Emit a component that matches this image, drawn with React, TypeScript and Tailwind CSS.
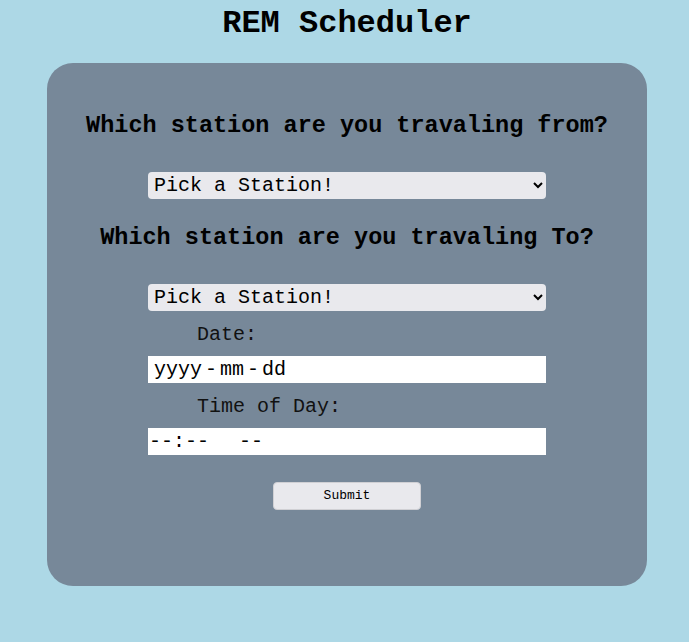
import React from "react";

export default function App() {
  const mono = { fontFamily: '"Liberation Mono", "Courier New", monospace' };
  return (
    <div className="min-h-[642px] w-full bg-[#add8e6] text-black" style={mono}>
      <div className="ml-[47px] w-[600px] pt-[6px]">
        <h1 className="text-center text-[32px] leading-[36px] font-bold">REM Scheduler</h1>
        <div className="mt-[21px] flex flex-col rounded-[26px] bg-[#778899] pt-[49px] pb-[76px]">
          <h2 className="text-center text-[23.5px] leading-[28px] font-bold">Which station are you travaling from?</h2>
          <select
            className="mt-[32px] ml-[101px] h-[27px] w-[398px] rounded-[4px] border-0 bg-[#e9e9ed] pl-[2px] text-[20px] leading-[24px] text-black"
            style={mono}
            defaultValue="pick"
          >
            <option value="pick">Pick a Station!</option>
          </select>
          <h2 className="mt-[25px] text-center text-[23.5px] leading-[28px] font-bold">Which station are you travaling To?</h2>
          <select
            className="mt-[32px] ml-[101px] h-[27px] w-[398px] rounded-[4px] border-0 bg-[#e9e9ed] pl-[2px] text-[20px] leading-[24px] text-black"
            style={mono}
            defaultValue="pick"
          >
            <option value="pick">Pick a Station!</option>
          </select>
          <label className="mt-[12px] ml-[150px] text-[20px] leading-[24px] text-[#111]">Date:</label>
          <div className="mt-[9px] ml-[101px] flex h-[27px] w-[398px] items-center bg-white pl-[6px] text-[20px] leading-[24px] text-black">
            <span>yyyy</span>
            <span className="mx-[3px]">-</span>
            <span>mm</span>
            <span className="mx-[3px]">-</span>
            <span>dd</span>
          </div>
          <label className="mt-[12px] ml-[150px] text-[20px] leading-[24px] text-[#111]">Time of Day:</label>
          <div className="mt-[9px] ml-[101px] flex h-[27px] w-[398px] items-center bg-white pl-[1px] text-[20px] leading-[24px] text-black">
            <span>--:--</span>
            <span className="ml-[30px]">--</span>
          </div>
          <button
            className="mt-[27px] ml-[226px] h-[28px] w-[148px] rounded-[4px] border border-[#d0d0d4] bg-[#e9e9ed] text-[13px] text-black"
            style={mono}
          >
            Submit
          </button>
        </div>
      </div>
    </div>
  );
}
